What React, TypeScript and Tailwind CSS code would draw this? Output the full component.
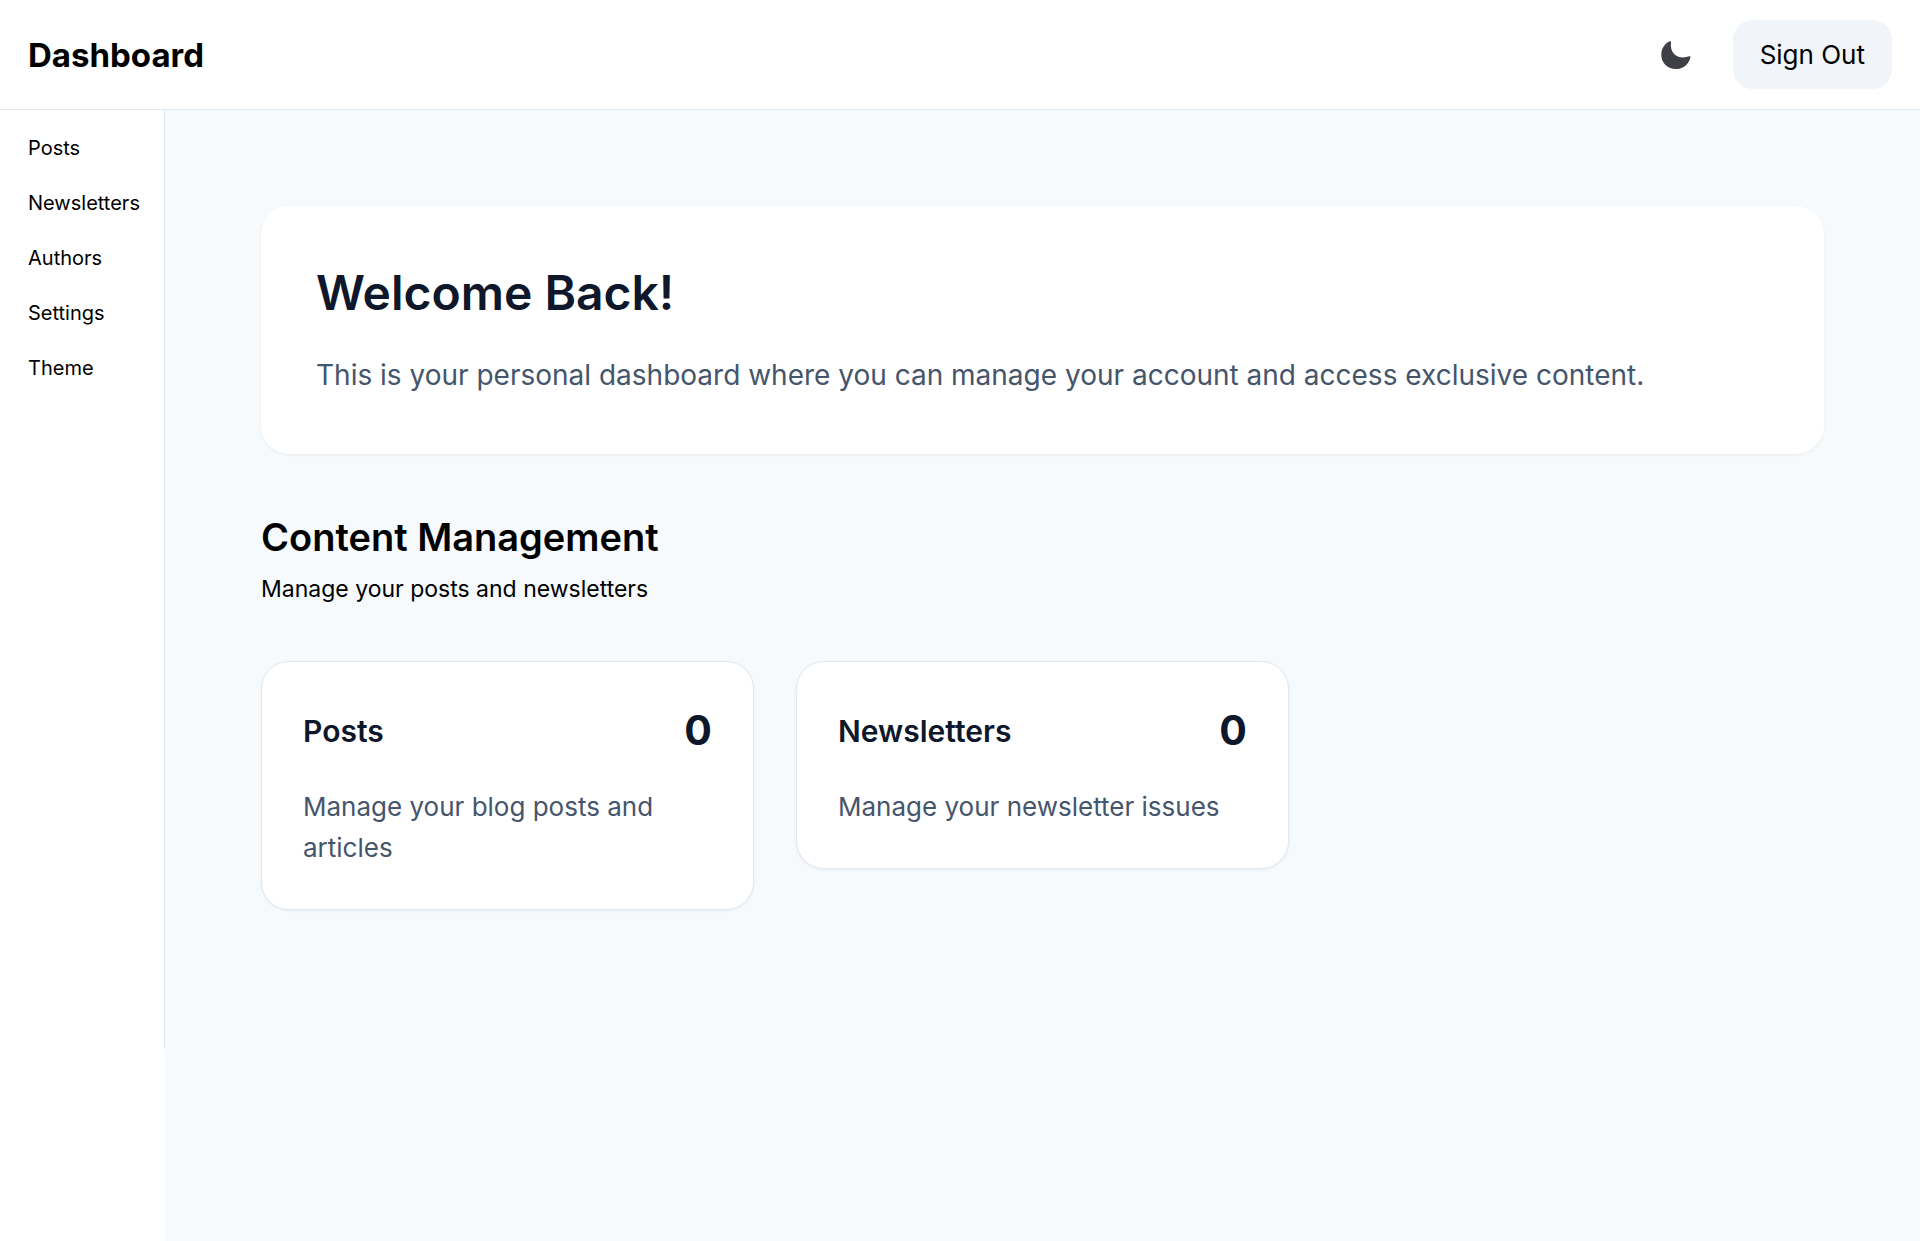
const navItems = ['Posts', 'Newsletters', 'Authors', 'Settings', 'Theme'];

const contentCards = [
  { title: 'Posts', count: 0, description: 'Manage your blog posts and articles' },
  { title: 'Newsletters', count: 0, description: 'Manage your newsletter issues' },
];

function MoonIcon() {
  return (
    <svg viewBox="0 0 30 28" className="h-7 w-[30px] fill-zinc-700" aria-hidden="true">
      <path d="M9 0.3 C9.8 0 10.2 0.5 10.1 1.2 C9.3 5.8 10.4 10.4 13.6 13.4 C17.2 16.7 22.9 17.3 28.2 15.3 C29 15.1 29.7 15.6 29.4 16.4 C27.7 23.3 22 28 14.9 28 C6.7 28 0.3 21.8 0.3 13.9 C0.3 7.6 3.8 2.2 9 0.3 Z" />
    </svg>
  );
}

function Header() {
  return (
    <header className="flex items-center justify-between border-b border-slate-200 bg-white px-7 py-5">
      <h1 className="text-[33px] leading-[48px] font-bold">Dashboard</h1>
      <div className="flex items-center gap-[42px]">
        <button type="button" aria-label="Toggle theme">
          <MoonIcon />
        </button>
        <button
          type="button"
          className="rounded-[20px] bg-slate-100 px-[27px] py-[14px] text-[26px] leading-[41px]"
        >
          Sign Out
        </button>
      </div>
    </header>
  );
}

function Sidebar() {
  return (
    <aside className="w-[165px] shrink-0 bg-white">
      <nav className="flex h-[939px] flex-col gap-[7px] border-r border-slate-200 px-7 py-[14px]">
        {navItems.map((item) => (
          <a key={item} href="#" className="text-[20px] leading-[48px]">
            {item}
          </a>
        ))}
      </nav>
    </aside>
  );
}

export default function App() {
  return (
    <div className="flex min-h-screen flex-col bg-[#f6fafd] font-['Inter',sans-serif] text-black">
      <Header />
      <div className="flex flex-1">
        <Sidebar />
        <main className="min-w-0 flex-1 p-24">
          <section className="rounded-[28px] bg-white p-[55px] shadow-[0_1px_3px_rgba(0,0,0,0.06)]">
            <h2 className="text-[48px] leading-[64px] font-semibold text-slate-900">Welcome Back!</h2>
            <p className="mt-[26px] text-[28px] leading-[48px] text-slate-600">
              This is your personal dashboard where you can manage your account and access exclusive content.
            </p>
          </section>

          <section className="mt-14">
            <h2 className="text-[38px] leading-[55px] font-semibold">Content Management</h2>
            <p className="mt-[7px] text-[23px] leading-[34px]">Manage your posts and newsletters</p>
            <div className="mt-[55px] grid grid-cols-3 items-start gap-[42px]">
              {contentCards.map((card) => (
                <article
                  key={card.title}
                  className="rounded-[28px] border border-slate-200 bg-white p-[41px] shadow-[0_1px_3px_rgba(0,0,0,0.06)]"
                >
                  <div className="flex items-center justify-between">
                    <h3 className="text-[30px] leading-[48px] font-semibold text-slate-900">{card.title}</h3>
                    <span className="text-[41px] leading-[55px] font-bold text-slate-900">{card.count}</span>
                  </div>
                  <p className="mt-7 text-[26px] leading-[41px] text-slate-600">{card.description}</p>
                </article>
              ))}
            </div>
          </section>
        </main>
      </div>
    </div>
  );
}
